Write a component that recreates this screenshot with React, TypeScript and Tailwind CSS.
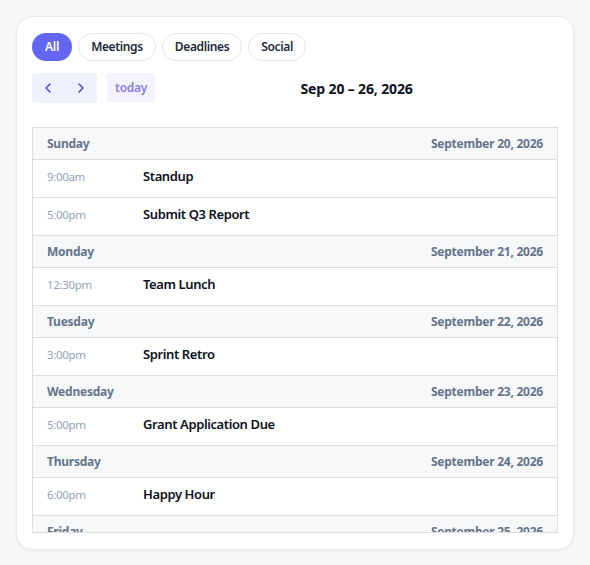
import { ChevronLeft, ChevronRight } from 'lucide-react';

type Ev = { time: string; title: string };
type Day = { name: string; date: string; events: Ev[] };

const days: Day[] = [
  { name: 'Sunday', date: 'September 20, 2026', events: [{ time: '9:00am', title: 'Standup' }, { time: '5:00pm', title: 'Submit Q3 Report' }] },
  { name: 'Monday', date: 'September 21, 2026', events: [{ time: '12:30pm', title: 'Team Lunch' }] },
  { name: 'Tuesday', date: 'September 22, 2026', events: [{ time: '3:00pm', title: 'Sprint Retro' }] },
  { name: 'Wednesday', date: 'September 23, 2026', events: [{ time: '5:00pm', title: 'Grant Application Due' }] },
  { name: 'Thursday', date: 'September 24, 2026', events: [{ time: '6:00pm', title: 'Happy Hour' }] },
  { name: 'Friday', date: 'September 25, 2026', events: [{ time: '10:00am', title: 'Design Review' }] },
  { name: 'Saturday', date: 'September 26, 2026', events: [{ time: '11:00am', title: 'Brunch' }] },
];

const filters = ['All', 'Meetings', 'Deadlines', 'Social'];

export default function App() {
  return (
    <div className="min-h-screen bg-[#f6f7f9] p-4 font-['Noto_Sans',sans-serif]">
      <div className="bg-white rounded-2xl border border-[#e8eaee] shadow-[0_1px_3px_rgba(15,23,42,0.06)] px-[15px] pt-4 pb-4">
        {/* Filter pills */}
        <div className="flex gap-[6px]">
          {filters.map((f, i) => (
            <button
              key={f}
              className={
                i === 0
                  ? 'h-[28px] px-[13px] rounded-full bg-[#6366f1] text-white text-[12px] font-semibold tracking-[-0.02em]'
                  : 'h-[28px] px-[12px] rounded-full border border-[#e2e8f0] bg-white text-[#1e293b] text-[12px] font-semibold tracking-[-0.03em]'
              }
            >
              {f}
            </button>
          ))}
        </div>

        {/* Toolbar */}
        <div className="flex items-center justify-between mt-[12px] mb-[24px]">
          <div className="flex gap-[10px]">
            <div className="flex bg-[#eef2ff] rounded-[4px] h-[30px] w-[65px]">
              <button className="flex-1 flex items-center justify-center text-[#4f46e5]">
                <ChevronLeft size={16} strokeWidth={2.2} />
              </button>
              <button className="flex-1 flex items-center justify-center text-[#4f46e5]">
                <ChevronRight size={16} strokeWidth={2.2} />
              </button>
            </div>
            <button className="h-[29px] px-[8px] rounded-[4px] bg-[#f3f3fe] text-[#8b80dc] text-[12px] font-semibold tracking-[-0.02em]">today</button>
          </div>
          <h2 className="text-[14px] font-bold text-[#0b1020] tracking-[-0.01em]">Sep 20 – 26, 2026</h2>
          <div />
        </div>

        {/* List */}
        <div className="h-[406px] overflow-hidden border border-[#dcdde0]">
          {days.map((d) => (
            <div key={d.name}>
              <div className="h-[32px] flex items-center justify-between px-[14px] bg-[#f7f8fa] border-b border-[#dcdde0] text-[12px] font-bold text-[#64748b] tracking-[-0.02em]">
                <span>{d.name}</span>
                <span>{d.date}</span>
              </div>
              {d.events.map((e) => (
                <div key={e.title} className="h-[38px] flex items-center px-[14px] pb-[4px] border-b border-[#dcdde0]">
                  <span className="w-[96px] text-[11.5px] text-[#94a3b8] tracking-[-0.03em]">{e.time}</span>
                  <span className="text-[13px] font-semibold text-[#0b1020] tracking-[-0.03em]">{e.title}</span>
                </div>
              ))}
            </div>
          ))}
        </div>
      </div>
    </div>
  );
}
